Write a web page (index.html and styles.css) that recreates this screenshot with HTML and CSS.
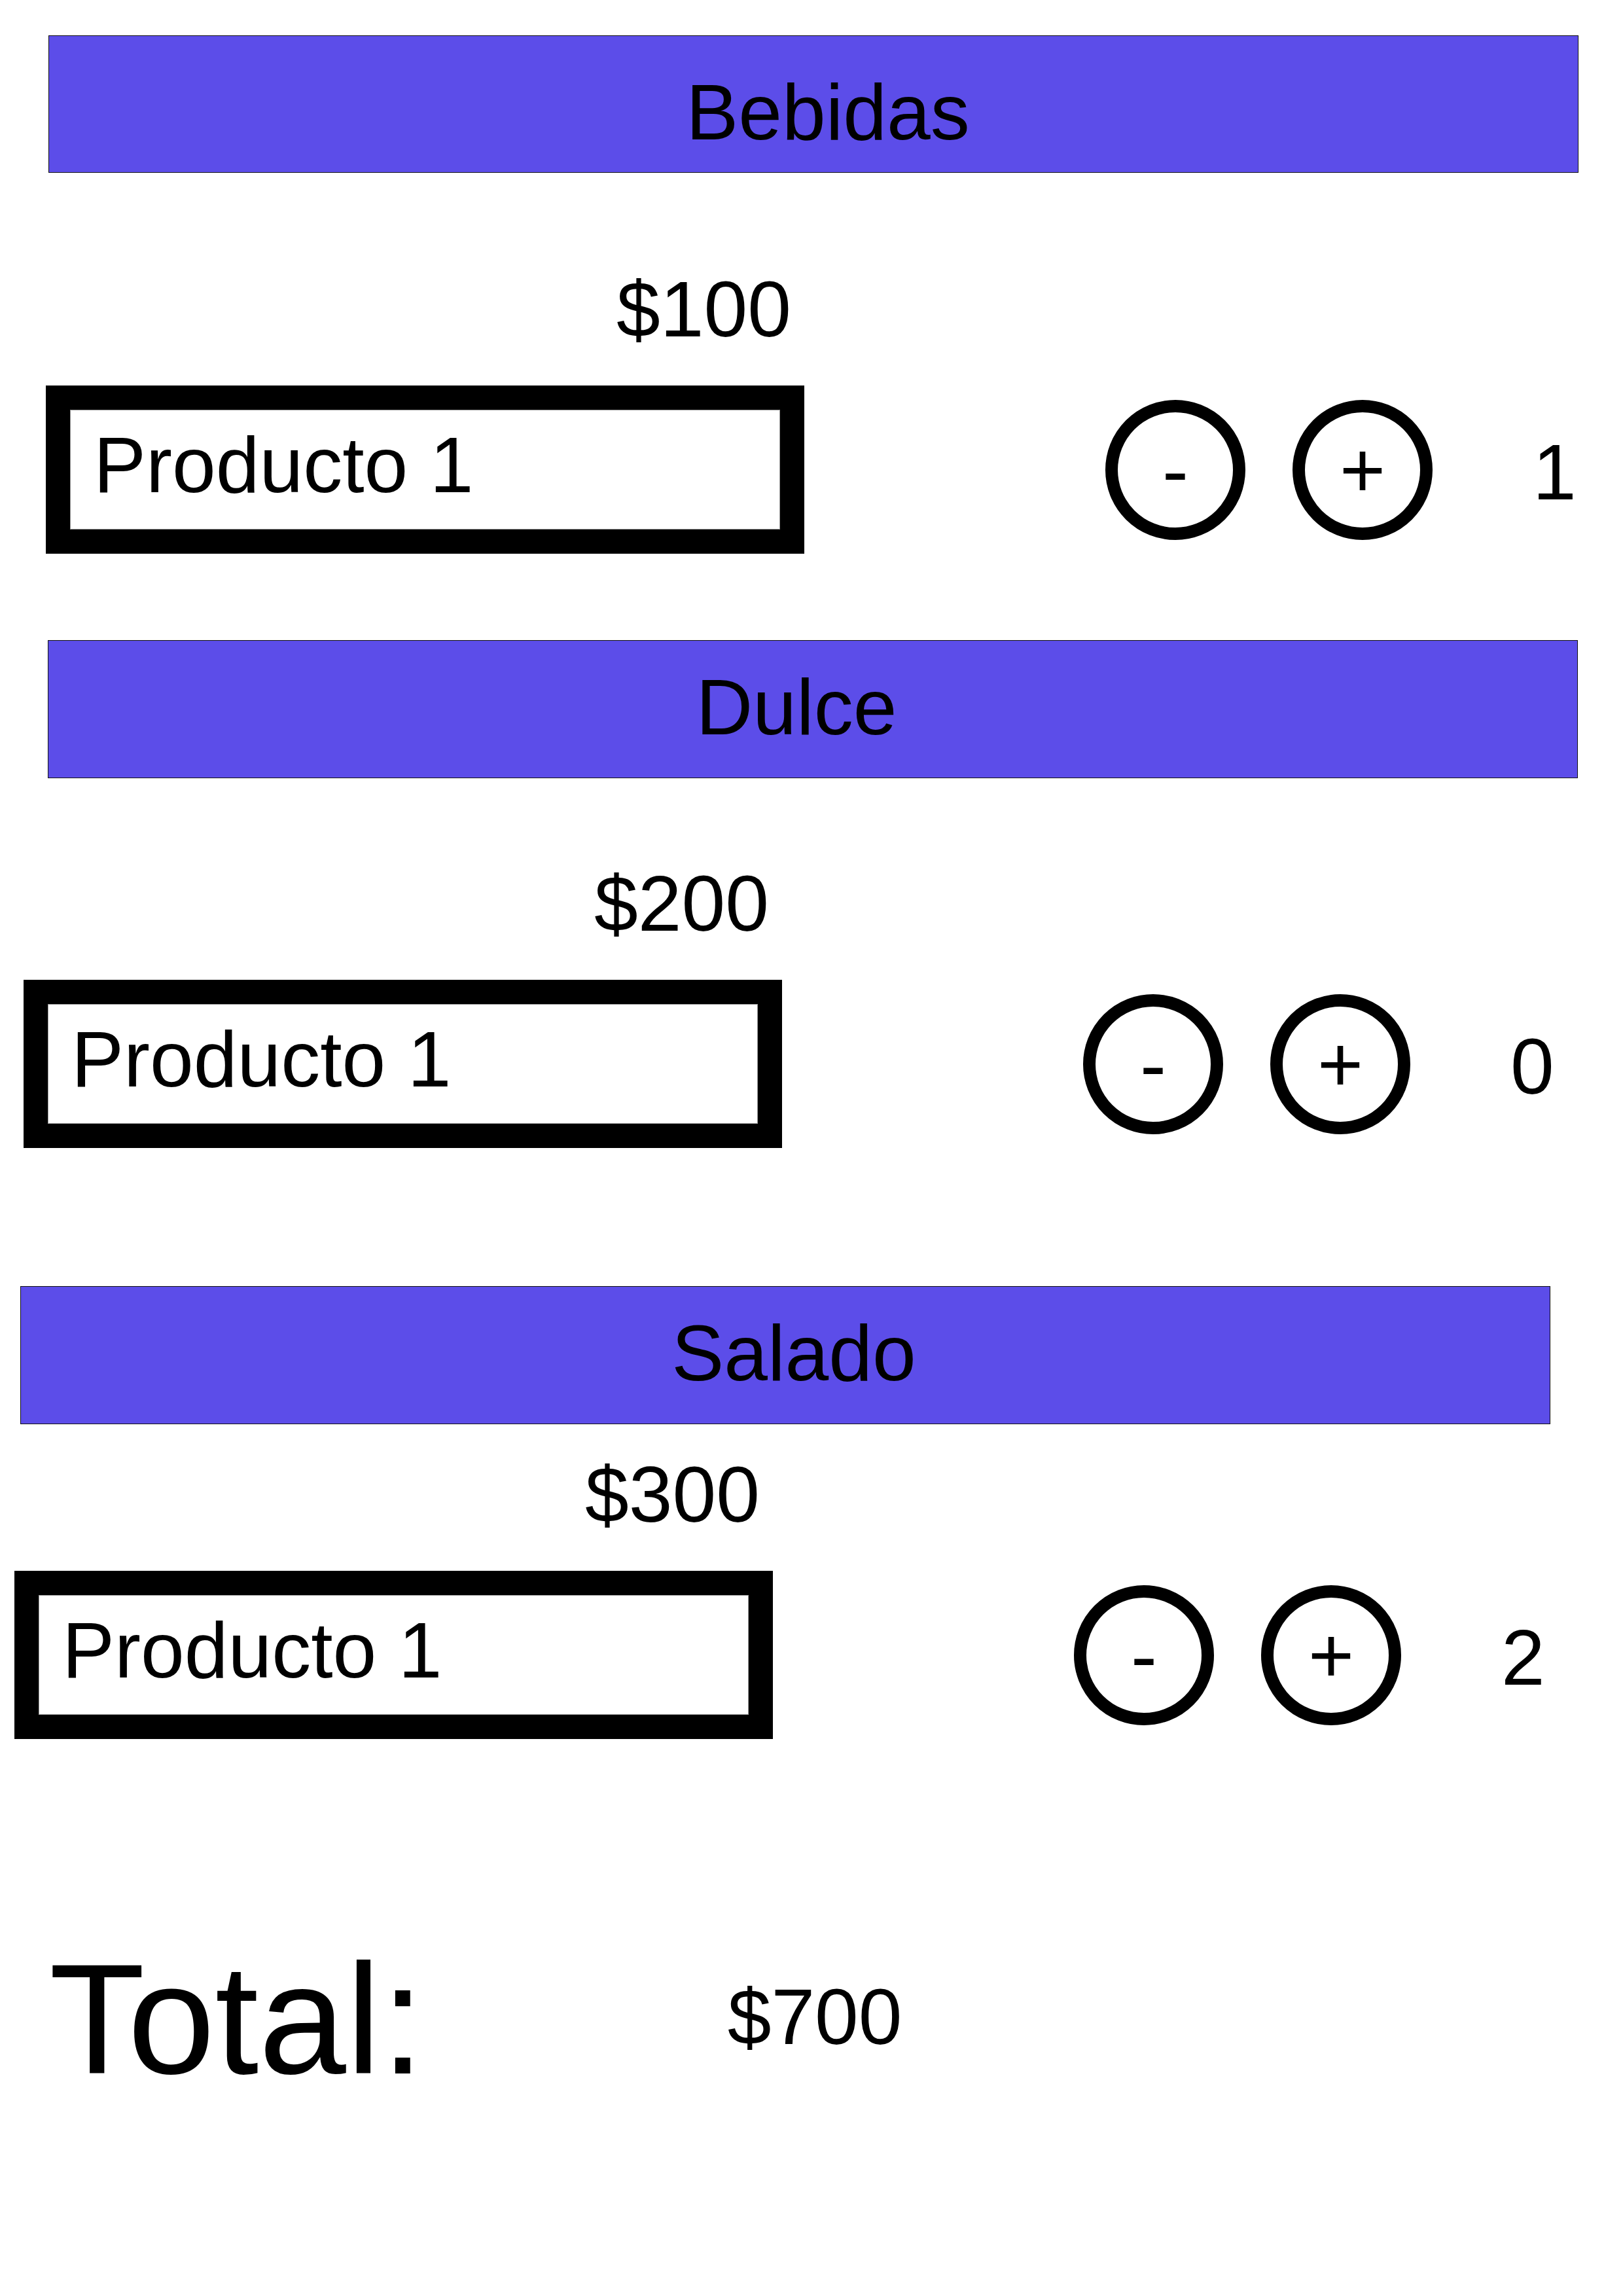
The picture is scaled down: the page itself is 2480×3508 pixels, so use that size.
FILE: index.html
```html
<!DOCTYPE html>
<html lang="es">
<head>
<meta charset="utf-8">
<title>Carrito</title>
<link rel="stylesheet" href="styles.css">
</head>
<body>
<main class="page">
  <section class="section section--bebidas">
    <h2 class="bar">Bebidas</h2>
    <div class="item">
      <div class="price">$100</div>
      <div class="row">
        <div class="product"><div class="product-name">Producto 1</div></div>
        <div class="controls">
          <button class="circle" type="button">-</button>
          <button class="circle" type="button">+</button>
        </div>
        <div class="qty">1</div>
      </div>
    </div>
  </section>

  <section class="section section--dulce">
    <h2 class="bar">Dulce</h2>
    <div class="item">
      <div class="price">$200</div>
      <div class="row">
        <div class="product"><div class="product-name">Producto 1</div></div>
        <div class="controls">
          <button class="circle" type="button">-</button>
          <button class="circle" type="button">+</button>
        </div>
        <div class="qty">0</div>
      </div>
    </div>
  </section>

  <section class="section section--salado">
    <h2 class="bar">Salado</h2>
    <div class="item">
      <div class="price">$300</div>
      <div class="row">
        <div class="product"><div class="product-name">Producto 1</div></div>
        <div class="controls">
          <button class="circle" type="button">-</button>
          <button class="circle" type="button">+</button>
        </div>
        <div class="qty">2</div>
      </div>
    </div>
  </section>

  <div class="total">
    <span class="total-label">Total:</span>
    <span class="total-value">$700</span>
  </div>
</main>
</body>
</html>
```

FILE: styles.css
```css
html, body {
  margin: 0;
  padding: 0;
  background: #ffffff;
}

body {
  font-family: "Liberation Sans", Arial, sans-serif;
  color: #000000;
}

.page {
  padding-top: 54px;
}

.bar {
  box-sizing: border-box;
  width: 2338px;
  height: 211px;
  margin: 0;
  background: #5c4de9;
  border: 1px solid #111111;
  font-size: 120px;
  font-weight: 400;
  line-height: 1;
  text-align: center;
  padding-top: 41px;
}

.price {
  font-size: 120px;
  line-height: 1;
  margin-left: 872px;
}

.row {
  display: flex;
  align-items: center;
  margin-top: 57px;
}

.product {
  box-sizing: border-box;
  width: 1159px;
  height: 257px;
  border: 37px solid #000000;
  background: #000000;
}

.product-name {
  box-sizing: border-box;
  height: 100%;
  background: #ffffff;
  border: 1px solid #9a9a9a;
  padding: 23px 0 0 35px;
  font-size: 120px;
  line-height: 1;
}

.controls {
  display: flex;
  gap: 72px;
  margin-left: 460px;
}

.circle {
  box-sizing: border-box;
  width: 214px;
  height: 214px;
  border: 19px solid #000000;
  border-radius: 50%;
  background: #ffffff;
  padding: 0;
  display: flex;
  align-items: center;
  justify-content: center;
  font-family: "Liberation Sans", Arial, sans-serif;
  font-size: 120px;
  line-height: 1;
  color: #000000;
}

.qty {
  margin-left: 153px;
  font-size: 120px;
  line-height: 1;
  padding-top: 6px;
}

/* Section-specific placement */
.section--bebidas .bar {
  margin-left: 74px;
  height: 210px;
  padding-top: 56px;
  padding-left: 44px;
}
.section--bebidas .item {
  margin-left: 70px;
  margin-top: 148px;
}

.section--dulce {
  margin-top: 132px;
}
.section--dulce .bar {
  margin-left: 73px;
  padding-right: 50px;
}
.section--dulce .item {
  margin-left: 36px;
  margin-top: 131px;
}

.section--salado {
  margin-top: 211px;
}
.section--salado .bar {
  margin-left: 31px;
  padding-left: 26px;
}
.section--salado .item {
  margin-left: 22px;
  margin-top: 47px;
}

.total {
  display: flex;
  align-items: center;
  margin-top: 308px;
  margin-left: 75px;
}

.total-label {
  font-size: 240px;
  line-height: 1;
}

.total-value {
  font-size: 120px;
  line-height: 1;
  margin-left: 463px;
  margin-bottom: 8px;
}
```
